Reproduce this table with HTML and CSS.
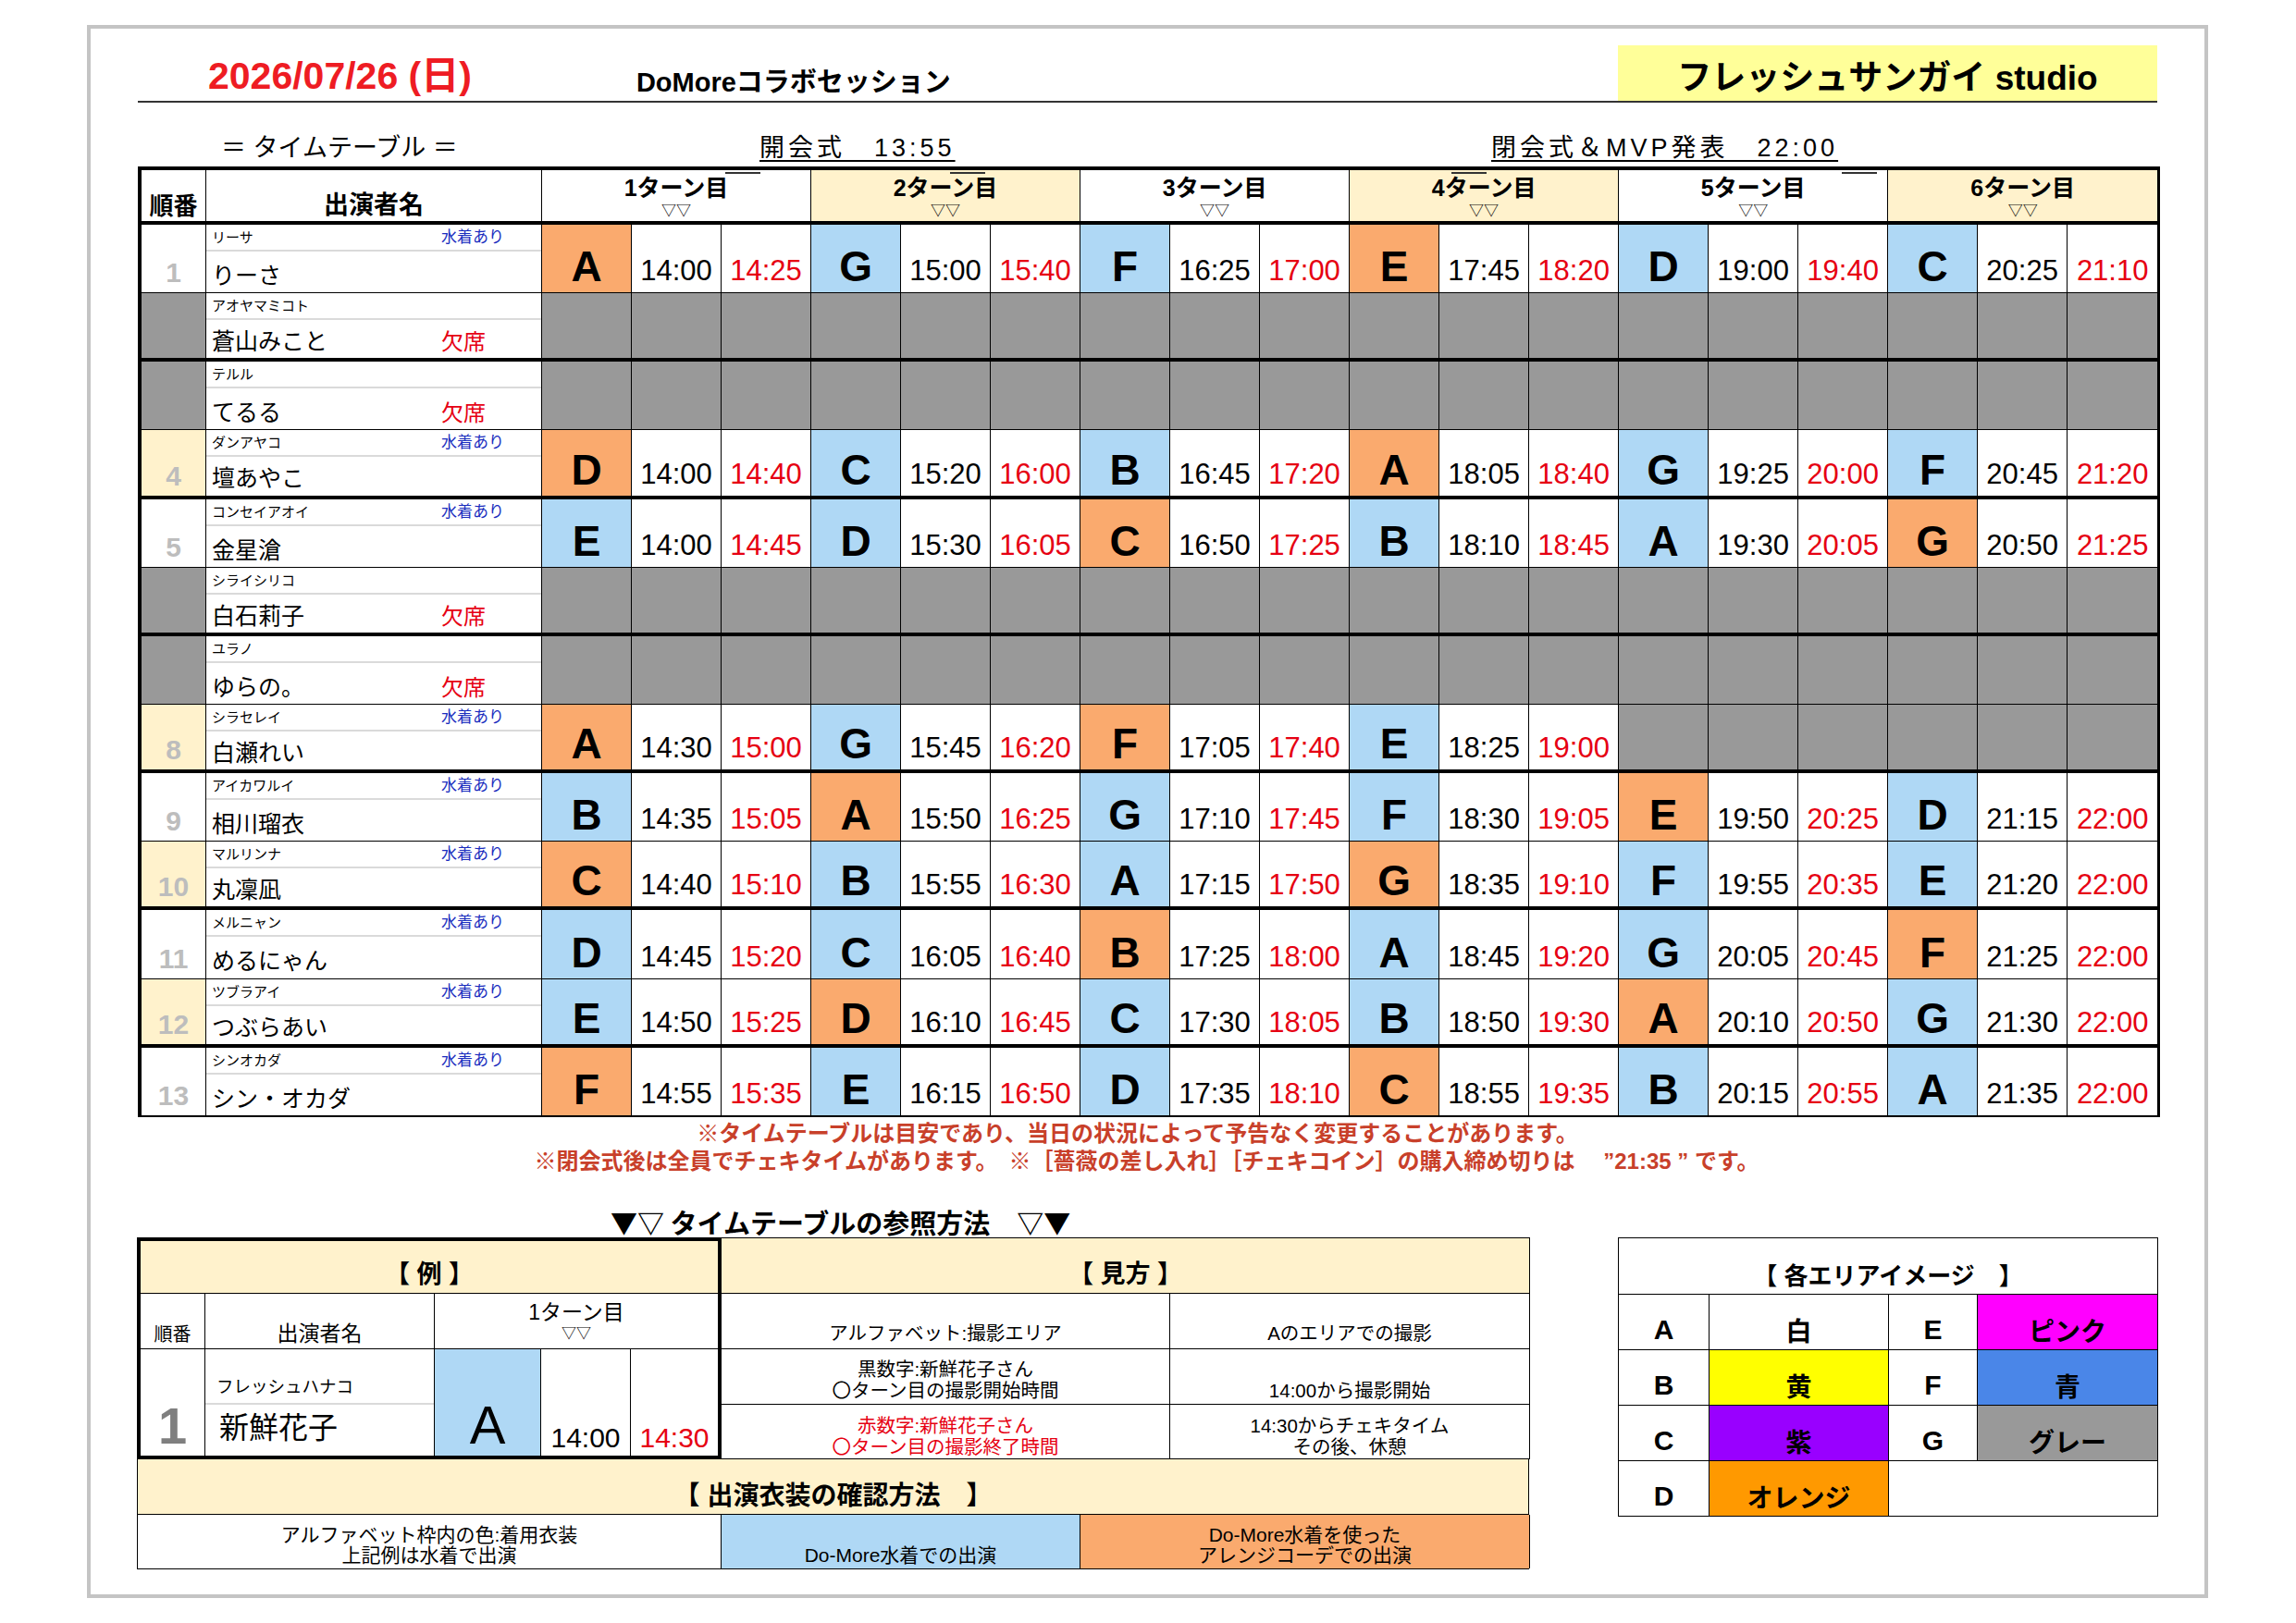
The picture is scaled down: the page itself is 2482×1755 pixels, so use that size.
FILE: index.html
```html
<!DOCTYPE html>
<html lang="ja">
<head>
<meta charset="utf-8">
<title>タイムテーブル</title>
<link rel="stylesheet" href="styles.css">
</head>
<body>
<div class="page">
<div class="sheet">
  <header class="title-row">
    <div class="date">2026/07/26 (日)</div>
    <div class="event">DoMoreコラボセッション</div>
    <div class="studio">フレッシュサンガイ studio</div>
  </header>
  <div class="sub-row">
    <span class="tt-label">＝ タイムテーブル ＝</span>
    <span class="u">開会式　13:55</span>
    <span class="u">閉会式＆MVP発表　22:00</span>
  </div>

  <table class="tt">
    <colgroup>
      <col class="c-no"><col class="c-name">
      <col class="c-s"><col class="c-s"><col class="c-s"><col class="c-s"><col class="c-s"><col class="c-s">
      <col class="c-s"><col class="c-s"><col class="c-s"><col class="c-s"><col class="c-s"><col class="c-s">
      <col class="c-s"><col class="c-s"><col class="c-s"><col class="c-s"><col class="c-s"><col class="c-s">
    </colgroup>
    <thead>
      <tr>
        <th class="h-no">順番</th>
        <th class="h-name">出演者名</th>
        <th colspan="3" class="turn"><div class="tn">1ターン目</div><div class="tri">▽▽</div><span class="ol ol1"></span></th>
        <th colspan="3" class="turn y"><div class="tn">2ターン目</div><div class="tri">▽▽</div><span class="ol ol2"></span></th>
        <th colspan="3" class="turn"><div class="tn">3ターン目</div><div class="tri">▽▽</div></th>
        <th colspan="3" class="turn y"><div class="tn">4ターン目</div><div class="tri">▽▽</div><span class="ol ol4"></span></th>
        <th colspan="3" class="turn"><div class="tn">5ターン目</div><div class="tri">▽▽</div><span class="ol ol5"></span></th>
        <th colspan="3" class="turn y"><div class="tn">6ターン目</div><div class="tri">▽▽</div></th>
      </tr>
    </thead>
    <tbody>
      <tr>
        <td class="no">1</td>
        <td class="nm"><div class="kana"><span>リーサ</span><span class="sw">水着あり</span></div><div class="nml"><span>りーさ</span><span></span></div></td>
        <td class="lt o">A</td><td class="tm">14:00</td><td class="tm r">14:25</td>
        <td class="lt b">G</td><td class="tm">15:00</td><td class="tm r">15:40</td>
        <td class="lt b">F</td><td class="tm">16:25</td><td class="tm r">17:00</td>
        <td class="lt o">E</td><td class="tm">17:45</td><td class="tm r">18:20</td>
        <td class="lt b">D</td><td class="tm">19:00</td><td class="tm r">19:40</td>
        <td class="lt b">C</td><td class="tm">20:25</td><td class="tm r">21:10</td>
      </tr>
      <tr class="thick">
        <td class="no gr"></td>
        <td class="nm"><div class="kana"><span>アオヤマミコト</span><span></span></div><div class="nml"><span>蒼山みこと</span><span class="ab">欠席</span></div></td>
        <td class="g"></td><td class="g"></td><td class="g"></td><td class="g"></td><td class="g"></td><td class="g"></td>
        <td class="g"></td><td class="g"></td><td class="g"></td><td class="g"></td><td class="g"></td><td class="g"></td>
        <td class="g"></td><td class="g"></td><td class="g"></td><td class="g"></td><td class="g"></td><td class="g"></td>
      </tr>
      <tr>
        <td class="no gr"></td>
        <td class="nm"><div class="kana"><span>テルル</span><span></span></div><div class="nml"><span>てるる</span><span class="ab">欠席</span></div></td>
        <td class="g"></td><td class="g"></td><td class="g"></td><td class="g"></td><td class="g"></td><td class="g"></td>
        <td class="g"></td><td class="g"></td><td class="g"></td><td class="g"></td><td class="g"></td><td class="g"></td>
        <td class="g"></td><td class="g"></td><td class="g"></td><td class="g"></td><td class="g"></td><td class="g"></td>
      </tr>
      <tr class="thick">
        <td class="no y">4</td>
        <td class="nm"><div class="kana"><span>ダンアヤコ</span><span class="sw">水着あり</span></div><div class="nml"><span>壇あやこ</span><span></span></div></td>
        <td class="lt o">D</td><td class="tm">14:00</td><td class="tm r">14:40</td>
        <td class="lt b">C</td><td class="tm">15:20</td><td class="tm r">16:00</td>
        <td class="lt b">B</td><td class="tm">16:45</td><td class="tm r">17:20</td>
        <td class="lt o">A</td><td class="tm">18:05</td><td class="tm r">18:40</td>
        <td class="lt b">G</td><td class="tm">19:25</td><td class="tm r">20:00</td>
        <td class="lt b">F</td><td class="tm">20:45</td><td class="tm r">21:20</td>
      </tr>
      <tr>
        <td class="no">5</td>
        <td class="nm"><div class="kana"><span>コンセイアオイ</span><span class="sw">水着あり</span></div><div class="nml"><span>金星滄</span><span></span></div></td>
        <td class="lt b">E</td><td class="tm">14:00</td><td class="tm r">14:45</td>
        <td class="lt b">D</td><td class="tm">15:30</td><td class="tm r">16:05</td>
        <td class="lt o">C</td><td class="tm">16:50</td><td class="tm r">17:25</td>
        <td class="lt b">B</td><td class="tm">18:10</td><td class="tm r">18:45</td>
        <td class="lt b">A</td><td class="tm">19:30</td><td class="tm r">20:05</td>
        <td class="lt o">G</td><td class="tm">20:50</td><td class="tm r">21:25</td>
      </tr>
      <tr class="thick">
        <td class="no gr"></td>
        <td class="nm"><div class="kana"><span>シライシリコ</span><span></span></div><div class="nml"><span>白石莉子</span><span class="ab">欠席</span></div></td>
        <td class="g"></td><td class="g"></td><td class="g"></td><td class="g"></td><td class="g"></td><td class="g"></td>
        <td class="g"></td><td class="g"></td><td class="g"></td><td class="g"></td><td class="g"></td><td class="g"></td>
        <td class="g"></td><td class="g"></td><td class="g"></td><td class="g"></td><td class="g"></td><td class="g"></td>
      </tr>
      <tr>
        <td class="no gr"></td>
        <td class="nm"><div class="kana"><span>ユラノ</span><span></span></div><div class="nml"><span>ゆらの。</span><span class="ab">欠席</span></div></td>
        <td class="g"></td><td class="g"></td><td class="g"></td><td class="g"></td><td class="g"></td><td class="g"></td>
        <td class="g"></td><td class="g"></td><td class="g"></td><td class="g"></td><td class="g"></td><td class="g"></td>
        <td class="g"></td><td class="g"></td><td class="g"></td><td class="g"></td><td class="g"></td><td class="g"></td>
      </tr>
      <tr class="thick">
        <td class="no y">8</td>
        <td class="nm"><div class="kana"><span>シラセレイ</span><span class="sw">水着あり</span></div><div class="nml"><span>白瀬れい</span><span></span></div></td>
        <td class="lt o">A</td><td class="tm">14:30</td><td class="tm r">15:00</td>
        <td class="lt b">G</td><td class="tm">15:45</td><td class="tm r">16:20</td>
        <td class="lt o">F</td><td class="tm">17:05</td><td class="tm r">17:40</td>
        <td class="lt b">E</td><td class="tm">18:25</td><td class="tm r">19:00</td>
        <td class="g"></td><td class="g"></td><td class="g"></td>
        <td class="g"></td><td class="g"></td><td class="g"></td>
      </tr>
      <tr>
        <td class="no">9</td>
        <td class="nm"><div class="kana"><span>アイカワルイ</span><span class="sw">水着あり</span></div><div class="nml"><span>相川瑠衣</span><span></span></div></td>
        <td class="lt b">B</td><td class="tm">14:35</td><td class="tm r">15:05</td>
        <td class="lt o">A</td><td class="tm">15:50</td><td class="tm r">16:25</td>
        <td class="lt b">G</td><td class="tm">17:10</td><td class="tm r">17:45</td>
        <td class="lt b">F</td><td class="tm">18:30</td><td class="tm r">19:05</td>
        <td class="lt o">E</td><td class="tm">19:50</td><td class="tm r">20:25</td>
        <td class="lt b">D</td><td class="tm">21:15</td><td class="tm r">22:00</td>
      </tr>
      <tr class="thick">
        <td class="no y">10</td>
        <td class="nm"><div class="kana"><span>マルリンナ</span><span class="sw">水着あり</span></div><div class="nml"><span>丸凜凪</span><span></span></div></td>
        <td class="lt o">C</td><td class="tm">14:40</td><td class="tm r">15:10</td>
        <td class="lt b">B</td><td class="tm">15:55</td><td class="tm r">16:30</td>
        <td class="lt b">A</td><td class="tm">17:15</td><td class="tm r">17:50</td>
        <td class="lt o">G</td><td class="tm">18:35</td><td class="tm r">19:10</td>
        <td class="lt b">F</td><td class="tm">19:55</td><td class="tm r">20:35</td>
        <td class="lt b">E</td><td class="tm">21:20</td><td class="tm r">22:00</td>
      </tr>
      <tr>
        <td class="no">11</td>
        <td class="nm"><div class="kana"><span>メルニャン</span><span class="sw">水着あり</span></div><div class="nml"><span>めるにゃん</span><span></span></div></td>
        <td class="lt b">D</td><td class="tm">14:45</td><td class="tm r">15:20</td>
        <td class="lt b">C</td><td class="tm">16:05</td><td class="tm r">16:40</td>
        <td class="lt o">B</td><td class="tm">17:25</td><td class="tm r">18:00</td>
        <td class="lt b">A</td><td class="tm">18:45</td><td class="tm r">19:20</td>
        <td class="lt b">G</td><td class="tm">20:05</td><td class="tm r">20:45</td>
        <td class="lt o">F</td><td class="tm">21:25</td><td class="tm r">22:00</td>
      </tr>
      <tr class="thick">
        <td class="no y">12</td>
        <td class="nm"><div class="kana"><span>ツブラアイ</span><span class="sw">水着あり</span></div><div class="nml"><span>つぶらあい</span><span></span></div></td>
        <td class="lt b">E</td><td class="tm">14:50</td><td class="tm r">15:25</td>
        <td class="lt o">D</td><td class="tm">16:10</td><td class="tm r">16:45</td>
        <td class="lt b">C</td><td class="tm">17:30</td><td class="tm r">18:05</td>
        <td class="lt b">B</td><td class="tm">18:50</td><td class="tm r">19:30</td>
        <td class="lt o">A</td><td class="tm">20:10</td><td class="tm r">20:50</td>
        <td class="lt b">G</td><td class="tm">21:30</td><td class="tm r">22:00</td>
      </tr>
      <tr>
        <td class="no">13</td>
        <td class="nm"><div class="kana"><span>シンオカダ</span><span class="sw">水着あり</span></div><div class="nml"><span>シン・オカダ</span><span></span></div></td>
        <td class="lt o">F</td><td class="tm">14:55</td><td class="tm r">15:35</td>
        <td class="lt b">E</td><td class="tm">16:15</td><td class="tm r">16:50</td>
        <td class="lt b">D</td><td class="tm">17:35</td><td class="tm r">18:10</td>
        <td class="lt o">C</td><td class="tm">18:55</td><td class="tm r">19:35</td>
        <td class="lt b">B</td><td class="tm">20:15</td><td class="tm r">20:55</td>
        <td class="lt b">A</td><td class="tm">21:35</td><td class="tm r">22:00</td>
      </tr>
    </tbody>
  </table>

  <div class="notes">
    <div class="n1">※タイムテーブルは目安であり、当日の状況によって予告なく変更することがあります。</div>
    <div class="n2">※閉会式後は全員でチェキタイムがあります。　※［薔薇の差し入れ］［チェキコイン］の購入締め切りは　 ”21:35 ” です。</div>
  </div>

  <div class="howto">▼▽ タイムテーブルの参照方法　▽▼</div>

  <div class="bottom">
    <div class="guide">
      <div class="guide-top">
        <table class="ex">
          <colgroup><col class="e1"><col class="e2"><col class="e3"><col class="e4"><col class="e5"></colgroup>
          <tr class="r1"><td colspan="5" class="hd">【 例 】</td></tr>
          <tr class="r2">
            <td class="ex-no">順番</td>
            <td class="ex-nm">出演者名</td>
            <td colspan="3" class="ex-turn"><div class="tn">1ターン目</div><div class="tri">▽▽</div></td>
          </tr>
          <tr class="r3">
            <td class="ex-num">1</td>
            <td class="ex-name"><div class="ek">フレッシュハナコ</div><div class="en">新鮮花子</div></td>
            <td class="ex-lt">A</td>
            <td class="ex-tm">14:00</td>
            <td class="ex-tm r">14:30</td>
          </tr>
        </table>
        <table class="mk">
          <colgroup><col class="m1"><col class="m2"></colgroup>
          <tr class="m-r1"><td colspan="2" class="hd">【 見方 】</td></tr>
          <tr class="m-r2"><td>アルファベット:撮影エリア</td><td>Aのエリアでの撮影</td></tr>
          <tr class="m-r3"><td>黒数字:新鮮花子さん<br>〇ターン目の撮影開始時間</td><td>14:00から撮影開始</td></tr>
          <tr class="m-r4"><td class="red">赤数字:新鮮花子さん<br>〇ターン目の撮影終了時間</td><td>14:30からチェキタイム<br>その後、休憩</td></tr>
        </table>
      </div>
      <div class="costume-head">【 出演衣装の確認方法　】</div>
      <div class="costume-row">
        <div class="cw">アルファベット枠内の色:着用衣装<br>上記例は水着で出演</div>
        <div class="cb">Do-More水着での出演</div>
        <div class="co">Do-More水着を使った<br>アレンジコーデでの出演</div>
      </div>
    </div>

    <table class="lg">
      <colgroup><col class="l1"><col class="l2"><col class="l3"><col class="l4"></colgroup>
      <tr class="lg-h"><td colspan="4">【 各エリアイメージ　】</td></tr>
      <tr><td class="ll">A</td><td class="lc">白</td><td class="ll">E</td><td class="lc pink">ピンク</td></tr>
      <tr><td class="ll">B</td><td class="lc yel">黄</td><td class="ll">F</td><td class="lc blu">青</td></tr>
      <tr><td class="ll">C</td><td class="lc pur">紫</td><td class="ll">G</td><td class="lc gry">グレー</td></tr>
      <tr><td class="ll">D</td><td class="lc org">オレンジ</td><td colspan="2" class="lc"></td></tr>
    </table>
  </div>
</div>
</div>
</body>
</html>
```

FILE: styles.css
```css
* { box-sizing: border-box; }
html, body { margin: 0; padding: 0; background: #fff; }
body {
  font-family: "Liberation Sans", "Noto Sans CJK JP", sans-serif;
  color: #000;
}

.page {
  margin: 27px 0 0 94px;
  width: 2293px;
  height: 1701px;
  border: 4px solid #c4c4c4;
}
.sheet { padding: 18px 0 0 51px; }

/* ===== title ===== */
.title-row {
  display: flex;
  width: 2183px;
  height: 62px;
  border-bottom: 2px solid #333;
}
.date {
  align-self: flex-end;
  margin-left: 76px;
  padding-bottom: 6px;
  color: #ee1c23;
  font-weight: 700;
  font-size: 41px;
  line-height: 1;
  white-space: nowrap;
}
.event {
  align-self: flex-end;
  margin-left: 178px;
  padding-bottom: 5px;
  font-weight: 700;
  font-size: 29px;
  line-height: 1;
  white-space: nowrap;
}
.studio {
  margin-left: auto;
  width: 583px;
  background: #ffff99;
  display: flex;
  align-items: flex-end;
  justify-content: center;
  padding-bottom: 6px;
  font-weight: 700;
  font-size: 37px;
  line-height: 1;
  white-space: nowrap;
}

.sub-row {
  display: grid;
  grid-template-columns: 582px 791px auto;
  align-items: end;
  height: 69px;
  padding: 0 0 6px 90px;
  font-size: 27px;
  line-height: 1;
  white-space: nowrap;
}
.u {
  text-decoration: underline;
  text-decoration-thickness: 2px;
  text-underline-offset: 4px;
  letter-spacing: 4px;
}

/* ===== main timetable ===== */
.tt {
  table-layout: fixed;
  border-collapse: separate;
  border-spacing: 0;
  width: 2000px;
  border-top: 4px solid #000;
  border-left: 4px solid #000;
  border-right: 3px solid #000;
}
.tt col.c-no { width: 70px; }
.tt col.c-name { width: 363px; }
.tt col.c-s { width: 97px; }
.tt th, .tt td {
  padding: 0;
  border-right: 1px solid #000;
  border-bottom: 1px solid #000;
  line-height: 1;
}
.tt tr > :last-child { border-right: 0; }
.tt thead tr { height: 59px; }
.tt thead th {
  border-bottom: 4px solid #000;
  vertical-align: bottom;
  font-weight: 700;
  white-space: nowrap;
}
.tt tbody tr { height: 74.15px; }
.tt tbody tr.thick td { border-bottom: 4px solid #000; }
.tt tbody tr:last-child td { border-bottom: 2px solid #000; }

.tt th.h-no { font-size: 26px; padding-bottom: 3px; }
.tt th.h-name { font-size: 27px; padding-bottom: 3px; }
.tt th.turn {
  position: relative;
  vertical-align: top;
  padding-top: 7px;
}
.turn.y { background: #fff2cc; }
.tn { font-size: 25px; line-height: 1; }
.tri { font-size: 16px; font-weight: 400; line-height: 1; margin-top: 4px; }
.ol {
  position: absolute;
  top: 2px;
  width: 38px;
  height: 2px;
  background: #333;
}
.ol1 { left: 198px; }
.ol2 { left: 150px; }
.ol4 { left: 110px; }
.ol5 { left: 241px; }

.tt td.no {
  text-align: center;
  vertical-align: bottom;
  padding-bottom: 6px;
  font-size: 30px;
  font-weight: 700;
  color: #bdbdbd;
}
.no.y { background: #fff2cc; }
.no.gr { background: #999; }

.nm { vertical-align: top; }
.kana {
  display: grid;
  grid-template-columns: 248px 1fr;
  align-items: center;
  height: 29px;
  padding-left: 6px;
  border-bottom: 2px solid #dadada;
  font-size: 15px;
  line-height: 1;
  white-space: nowrap;
}
.sw { color: #1a2dbe; font-size: 17px; }
.nml {
  display: grid;
  grid-template-columns: 248px 1fr;
  align-items: end;
  height: 44px;
  padding: 0 0 5px 6px;
  font-size: 25px;
  line-height: 1;
  white-space: nowrap;
}
tr.thick .nml { height: 41px; }
.ab { color: #e60012; font-size: 24px; }

.tt td.lt {
  text-align: center;
  vertical-align: bottom;
  padding-bottom: 5px;
  font-size: 46px;
  font-weight: 700;
}
.lt.o { background: #faaa6e; }
.lt.b { background: #afd8f5; }
.tt td.tm {
  text-align: center;
  vertical-align: bottom;
  padding-bottom: 8px;
  font-size: 31px;
  white-space: nowrap;
}
.tm.r { color: #e60012; }
.g { background: #999; }

/* ===== notes ===== */
.notes {
  margin-top: 3px;
  color: #c8402a;
  font-weight: 700;
  font-size: 24px;
  line-height: 30px;
  text-align: center;
  width: 2183px;
  white-space: nowrap;
}
.n1 { padding-right: 22px; }
.n2 { padding-right: 2px; }

.howto {
  margin-top: 35px;
  padding-left: 511px;
  font-family: "Noto Sans CJK JP", sans-serif;
  font-weight: 700;
  font-size: 29px;
  line-height: 30px;
  white-space: nowrap;
}

/* ===== bottom guide ===== */
.bottom {
  display: flex;
  align-items: flex-start;
  margin: 2px 0 0 -1px;
}
.guide { width: 1505px; }
.guide-top { display: flex; }

.ex {
  table-layout: fixed;
  border-collapse: separate;
  border-spacing: 0;
  width: 632px;
  border: 4px solid #000;
  flex: none;
}
.ex col.e1 { width: 70px; }
.ex col.e2 { width: 248px; }
.ex col.e3 { width: 115px; }
.ex col.e4 { width: 97px; }
.ex col.e5 { width: 94px; }
.ex td {
  padding: 0;
  border-right: 1px solid #000;
  border-bottom: 1px solid #000;
  line-height: 1;
  text-align: center;
  vertical-align: bottom;
  white-space: nowrap;
}
.ex tr > :last-child { border-right: 0; }
.ex tr:last-child td { border-bottom: 0; }
.ex .r1 { height: 57px; }
.ex .r2 { height: 60px; }
.ex .r3 { height: 115px; }
.ex td.hd, .mk td.hd {
  background: #fff2cc;
  font-weight: 700;
  font-size: 27px;
  line-height: 1;
  padding-bottom: 6px;
}
.ex td.ex-no { font-size: 20px; padding-bottom: 5px; }
.ex td.ex-nm { font-size: 23px; padding-bottom: 4px; }
.ex td.ex-turn { vertical-align: top; padding-top: 9px; }
.ex-turn .tn { font-size: 23px; }
.ex-turn .tri { margin-top: 3px; }
.ex td.ex-num {
  font-size: 56px;
  font-weight: 700;
  color: #7f7f7f;
  padding-bottom: 4px;
}
.ex td.ex-name { vertical-align: top; text-align: left; }
.ek {
  height: 60px;
  display: flex;
  align-items: flex-end;
  padding: 0 0 7px 12px;
  border-bottom: 2px solid #dadada;
  font-size: 18.5px;
}
.en {
  padding: 9px 0 0 15px;
  font-size: 32px;
}
.ex td.ex-lt {
  background: #afd8f5;
  font-size: 58px;
  padding-bottom: 4px;
}
.ex td.ex-tm { font-size: 30px; padding-bottom: 4px; }
.ex-tm.r { color: #e60012; }

.mk {
  table-layout: fixed;
  border-collapse: separate;
  border-spacing: 0;
  width: 873px;
  border-top: 1px solid #000;
  border-right: 1px solid #000;
  flex: none;
}
.mk col.m1 { width: 485px; }
.mk col.m2 { width: 388px; }
.mk td {
  padding: 0 0 3px;
  border-bottom: 1px solid #000;
  text-align: center;
  vertical-align: bottom;
  font-size: 20.5px;
  line-height: 23px;
  white-space: nowrap;
}
.mk tr > td:first-child:not(.hd) { border-right: 1px solid #000; }
.mk .m-r1 { height: 60px; }
.mk .m-r2 { height: 60px; }
.mk .m-r3 { height: 60px; }
.mk .m-r4 { height: 59px; }
.mk .m-r2 td { padding-bottom: 5px; }
.mk .m-r4 td { padding-bottom: 1px; }
.mk .red { color: #e60012; }

.costume-head {
  height: 60px;
  display: flex;
  align-items: flex-end;
  justify-content: center;
  padding-bottom: 5px;
  background: #fff2cc;
  border-left: 1px solid #000;
  border-right: 1px solid #000;
  border-bottom: 1px solid #000;
  font-weight: 700;
  font-size: 28px;
  line-height: 1;
}
.costume-row {
  display: grid;
  grid-template-columns: 631px 388px 486px;
  height: 59px;
  border-left: 1px solid #000;
  border-bottom: 1px solid #000;
}
.costume-row > div {
  display: flex;
  align-items: flex-end;
  justify-content: center;
  text-align: center;
  padding-bottom: 3px;
  border-right: 1px solid #000;
  font-size: 21px;
  line-height: 22px;
  white-space: nowrap;
}
.cb { background: #afd8f5; }
.co { background: #faaa6e; }

/* ===== legend ===== */
.lg {
  table-layout: fixed;
  border-collapse: collapse;
  width: 583px;
  margin-left: 96px;
  flex: none;
}
.lg col.l1 { width: 98px; }
.lg col.l2 { width: 194px; }
.lg col.l3 { width: 96px; }
.lg col.l4 { width: 195px; }
.lg td {
  border: 1px solid #000;
  padding: 0;
  height: 60px;
  text-align: center;
  vertical-align: bottom;
  line-height: 1;
  white-space: nowrap;
}
.lg .lg-h td {
  height: 61px;
  font-weight: 700;
  font-size: 26px;
  padding-bottom: 6px;
}
.lg td.ll { font-weight: 700; font-size: 30px; padding-bottom: 6px; }
.lg td.lc { font-weight: 700; font-size: 28px; padding-bottom: 4px; }
.pink { background: #ff00ff; }
.yel { background: #ffff00; }
.blu { background: #4a86e8; }
.pur { background: #9900ff; }
.gry { background: #999999; }
.org { background: #ff9900; }
```
